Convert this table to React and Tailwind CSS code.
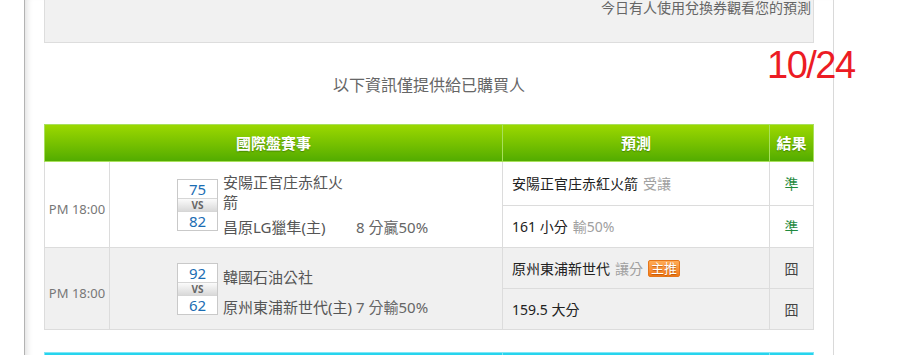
import React from "react";

const matches = [
    {
        time: "PM 18:00",
        bg: "bg-white",
        away: "安陽正官庄赤紅火箭",
        awayScore: 75,
        home: "昌原LG獵隼(主)",
        homeScore: 82,
        line: "8 分贏50%",
        infoGap: "gap-[5px]",
        infoShift: "",
        rowH: "h-[86px]",
        firstH: "h-[44px]",
        picks: [
            { main: "安陽正官庄赤紅火箭", note: "受讓", hot: false, result: "準" },
            { main: "161 小分", note: "輸50%", hot: false, result: "準" },
        ],
    },
    {
        time: "PM 18:00",
        bg: "bg-[#f0f0f0]",
        away: "韓國石油公社",
        awayScore: 92,
        home: "原州東浦新世代(主)",
        homeScore: 62,
        line: "7 分輸50%",
        infoGap: "gap-[10px]",
        infoShift: "pt-[6px]",
        rowH: "h-[82px]",
        firstH: "h-[41px]",
        picks: [
            { main: "原州東浦新世代", note: "讓分", hot: true, result: "囧" },
            { main: "159.5 大分", note: "", hot: false, result: "囧" },
        ],
    },
];

const ScoreBox = ({ top, bottom }) => (
    <div className="w-[41px] shrink-0 border border-[#c9c9c9] bg-white">
        <div className="h-[18px] text-center text-[15px] leading-[18px] text-[#1b6db3]">{top}</div>
        <div className="h-[14px] border-y border-[#d6d6d6] bg-gradient-to-b from-[#fbfbfb] to-[#d9d9d9] text-center text-[10px] font-bold leading-[12px] text-[#666]">
            VS
        </div>
        <div className="h-[18px] text-center text-[15px] leading-[18px] text-[#1b6db3]">{bottom}</div>
    </div>
);

const MatchRow = ({ m }) => (
    <div className={`flex ${m.rowH} border-b border-[#dcdcdc] ${m.bg}`}>
        {/* 時間 */}
        <div className="flex w-[64px] shrink-0 items-center justify-center pt-[10px] text-[13px] text-[#777]">
            {m.time}
        </div>

        {/* 賽事 */}
        <div className="flex w-[393px] shrink-0 items-center gap-[5px] border-l border-[#dcdcdc] pl-[67px]">
            <ScoreBox top={m.awayScore} bottom={m.homeScore} />
            <div className={`flex flex-col ${m.infoGap} ${m.infoShift} text-[15px] leading-[20px] text-[#555]`}>
                <div className="w-[128px]">{m.away}</div>
                <div className="flex whitespace-nowrap">
                    <span className="w-[133px]">{m.home}</span>
                    <span className="text-[#666]">{m.line}</span>
                </div>
            </div>
        </div>

        {/* 預測 + 結果 */}
        <div className="flex flex-1 flex-col">
            {m.picks.map((p, i) => (
                <div
                    key={i}
                    className={`flex ${i === 0 ? `${m.firstH} border-b border-[#dcdcdc]` : "flex-1"}`}
                >
                    <div className="flex w-[267px] shrink-0 items-center border-l border-[#dcdcdc] pl-[9px] text-[14px] text-[#222]">
                        <span>{p.main}</span>
                        {p.note && <span className="ml-[5px] text-[#a0a0a0]">{p.note}</span>}
                        {p.hot && (
                            <span className="ml-[5px] rounded-[2px] border border-[#e5761a] bg-gradient-to-b from-[#ffab55] to-[#f27a12] px-[2px] text-[13px] leading-[15px] text-white [text-shadow:0_1px_1px_rgba(150,60,0,0.6)]">
                                主推
                            </span>
                        )}
                    </div>
                    <div
                        className={`flex flex-1 items-center justify-center border-l border-[#dcdcdc] text-[14px] ${
                            p.result === "準" ? "text-[#1f8a3e]" : "text-[#444]"
                        }`}
                    >
                        {p.result}
                    </div>
                </div>
            ))}
        </div>
    </div>
);

const App = () => {
    return (
        <div
            className="relative min-h-screen bg-white"
            style={{ fontFamily: '"Noto Sans", "Noto Sans CJK TC", sans-serif' }}
        >
            <div className="ml-[24px] min-h-screen w-[810px] border-l border-r border-l-[#b3b3b3] border-r-[#d9d9d9] pl-[19px] pr-[19px] shadow-[inset_7px_0_6px_-5px_rgba(0,0,0,0.13)]">
                {/* 上方提示 */}
                <div className="h-[43px] border border-t-0 border-[#dddddd] bg-[#f1f1f1] pr-[2px] text-right text-[14px] leading-[16px] text-[#666]">
                    今日有人使用兌換券觀看您的預測
                </div>

                <div className="h-[81px] pt-[30px] text-center text-[16px] leading-[24px] text-[#666]">
                    以下資訊僅提供給已購買人
                </div>

                {/* 國際盤 */}
                <div className="w-[770px]">
                    <div className="flex h-[38px] border border-[#a8e05c] bg-gradient-to-b from-[#9bd800] to-[#52ac00] text-[15px] font-bold text-white [text-shadow:0_1px_1px_rgba(40,90,0,0.5)]">
                        <div className="flex w-[457px] shrink-0 items-center justify-center">國際盤賽事</div>
                        <div className="flex w-[267px] shrink-0 items-center justify-center border-l border-[#a8e05c]">預測</div>
                        <div className="flex flex-1 items-center justify-center border-l border-[#a8e05c]">結果</div>
                    </div>
                    <div className="border-x border-[#dcdcdc]">
                        {matches.map((m, i) => (
                            <MatchRow key={i} m={m} />
                        ))}
                    </div>
                </div>

                {/* 下一個表格（只露出頂端） */}
                <div className="mt-[22px] flex h-[38px] w-[770px] border border-[#7fe6f6] bg-[#27d4ee]">
                    <div className="w-[457px] shrink-0" />
                    <div className="w-[267px] shrink-0 border-l border-[#7fe6f6]" />
                    <div className="flex-1 border-l border-[#7fe6f6]" />
                </div>
            </div>

            <div
                className="absolute left-[767px] top-[46px] text-[38px] leading-[38px] tracking-[-1.5px] text-[#ec1c24]"
                style={{ fontFamily: '"Liberation Sans", sans-serif' }}
            >
                10/24
            </div>
        </div>
    );
};

export default App;
